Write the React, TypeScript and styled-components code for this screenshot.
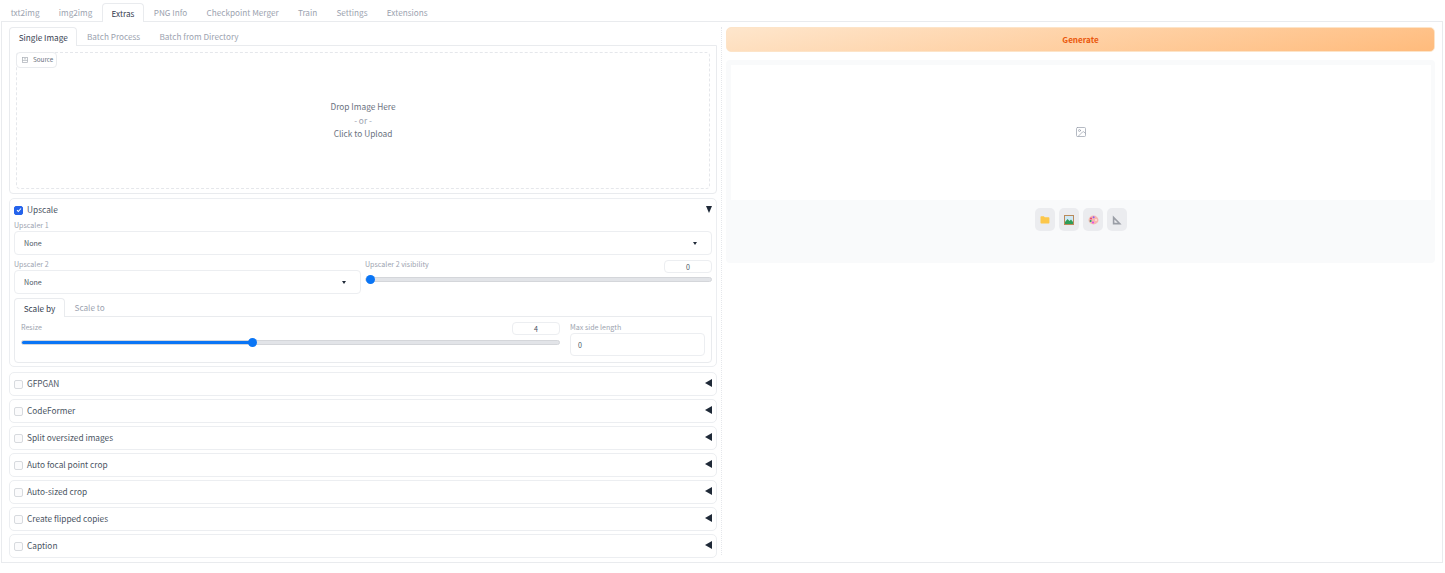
import React from 'react';
import styled, { createGlobalStyle } from 'styled-components';
import { Image as ImageIcon } from 'lucide-react';

const GlobalStyle = createGlobalStyle`
  html, body {
    margin: 0;
    padding: 0;
    background: #fff;
    font-family: "Noto Sans CJK SC", "Noto Sans", sans-serif;
    font-size: 8.2px;
    color: #374151;
  }
  * { box-sizing: border-box; }
`;

const Page = styled.div`
  width: 1445px;
  height: 573px;
  padding: 3px 2px 0 1px;
  overflow: hidden;
`;

const TabBar = styled.div`
  display: flex;
  height: 18px;
  position: relative;
  z-index: 1;
`;

const Tab = styled.div<{ $active?: boolean }>`
  height: ${p => (p.$active ? 19 : 18)}px;
  padding: 0 8.65px 1px;
  display: flex;
  align-items: center;
  color: ${p => (p.$active ? '#374151' : '#9ca3af')};
  background: ${p => (p.$active ? '#fff' : 'transparent')};
  border: 1px solid ${p => (p.$active ? '#e9ebee' : 'transparent')};
  border-bottom: none;
  border-radius: 4px 4px 0 0;
  white-space: nowrap;
`;

const MainPanel = styled.div`
  height: 542px;
  border: 1px solid #e9ebee;
  padding: 5px 7px 0;
  display: flex;
  gap: 9px;
`;

const Column = styled.div<{ $width: number }>`
  width: ${p => p.$width}px;
  flex: none;
`;

const LeftColumn = styled(Column)`
  position: relative;
  &::after {
    content: '';
    position: absolute;
    top: 0;
    bottom: 7px;
    right: -5px;
    border-right: 1px dotted #e5e7eb;
  }
`;

const TabBody = styled.div`
  height: 149px;
  border: 1px solid #e9ebee;
  border-radius: 0 0 4px 4px;
  padding: 6px 6px 4px;
  margin-bottom: 4px;
`;

const DropZone = styled.div`
  height: 137px;
  border: 1px dashed #e5e7eb;
  border-radius: 4px;
  position: relative;
  display: flex;
  flex-direction: column;
  align-items: center;
  justify-content: center;
  line-height: 13.7px;
  color: #6b7280;
  font-size: 8.3px;
`;

const Muted = styled.span`
  color: #9ca3af;
`;

const SourceTag = styled.div`
  position: absolute;
  top: -1px;
  left: -1px;
  width: 41px;
  height: 16px;
  display: flex;
  align-items: center;
  gap: 5px;
  padding-left: 5px;
  border: 1px solid #e9ebee;
  border-radius: 4px;
  background: #fff;
  color: #6b7280;
  font-size: 6.3px;
`;

const Card = styled.div`
  border: 1px solid #eceef1;
  border-radius: 5px;
  background: #fff;
`;

const UpscaleCard = styled(Card)`
  height: 169px;
  padding: 4px 4px 0;
  margin-bottom: 5px;
`;

const AccordionHead = styled.div`
  display: flex;
  align-items: center;
  height: 14px;
  padding-bottom: 2px;
  font-size: 8.3px;
  color: #4b5563;
`;

const Box = styled.span<{ $checked?: boolean }>`
  width: 9px;
  height: 9px;
  flex: none;
  margin: 2px 4px 0 0;
  border-radius: 2px;
  border: 1px solid ${p => (p.$checked ? '#2563eb' : '#d7dade')};
  background: ${p => (p.$checked ? '#2563eb' : '#fbfbfc')};
  display: flex;
  align-items: center;
  justify-content: center;
`;

const Arrow = styled.span<{ $open?: boolean }>`
  margin-left: auto;
  width: 0;
  height: 0;
  ${p =>
    p.$open
      ? `border-left: 3.5px solid transparent; border-right: 3.5px solid transparent; border-top: 7px solid #1f2937;`
      : `border-top: 4px solid transparent; border-bottom: 4px solid transparent; border-right: 7px solid #1f2937;`}
`;

const FieldLabel = styled.div<{ $top?: number }>`
  color: #9ca3af;
  font-size: 7.1px;
  line-height: 11px;
  white-space: nowrap;
  margin-top: ${p => p.$top ?? 0}px;
`;

const Select = styled.div`
  height: 24px;
  border: 1px solid #eceef1;
  border-radius: 4px;
  display: flex;
  align-items: center;
  justify-content: space-between;
  padding: 0 14px 0 9px;
  font-size: 7.1px;
  color: #4b5563;
  &::after {
    content: '';
    border-left: 2.5px solid transparent;
    border-right: 2.5px solid transparent;
    border-top: 3px solid #1f2937;
  }
`;

const FieldRow = styled.div`
  display: flex;
  gap: 4px;
  margin-top: 4px;
`;

const SliderField = styled.div`
  flex: 1;
  min-width: 0;
`;

const SliderHead = styled.div`
  display: flex;
  align-items: flex-start;
  justify-content: space-between;
  height: 14px;
`;

const NumberBox = styled.div`
  width: 48px;
  height: 13px;
  margin-top: 1px;
  border: 1px solid #eceef1;
  border-radius: 4px;
  font-size: 7.1px;
  color: #4b5563;
  display: flex;
  align-items: center;
  justify-content: center;
`;

const Track = styled.div<{ $top: number }>`
  position: relative;
  height: 5px;
  margin-top: ${p => p.$top}px;
  border-radius: 3px;
  background: #e2e4e8;
  border: 1px solid #d4d6da;
`;

const TrackFill = styled.div`
  height: 100%;
  background: #0a75f5;
  border-radius: 3px;
`;

const Thumb = styled.div`
  position: absolute;
  top: -3px;
  width: 9px;
  height: 9px;
  margin-left: -4.5px;
  background: #0a75f5;
  border-radius: 50%;
`;

const Slider: React.FC<{ percent: number; offset?: number; top: number }> = ({ percent, offset = 0, top }) => (
  <Track $top={top}>
    <TrackFill style={{ width: `${percent}%` }} />
    <Thumb style={{ left: `calc(${percent}% + ${offset}px)` }} />
  </Track>
);

const ScaleTabs = styled.div`
  margin-top: 4px;
`;

const ScaleBody = styled.div`
  height: 47px;
  border: 1px solid #e9ebee;
  border-radius: 0 0 4px 4px;
  padding: 4px 6px 0 6px;
  display: flex;
  gap: 10px;
`;

const NumberInput = styled.div`
  width: 135px;
  height: 23px;
  border: 1px solid #eceef1;
  border-radius: 4px;
  padding-left: 7px;
  display: flex;
  align-items: center;
  font-size: 7.1px;
  color: #4b5563;
`;

const Collapsed = styled(Card)`
  height: 24px;
  margin-bottom: 3px;
  padding: 0 4px 2px;
  display: flex;
  align-items: center;
  font-size: 8.3px;
  color: #4b5563;
`;

const GenerateButton = styled.button`
  display: block;
  width: 100%;
  height: 25px;
  border: 1px solid #fde4c8;
  border-radius: 5px;
  background: linear-gradient(170deg, #fee6cc 0%, #ffbb7c 100%);
  color: #ea580c;
  font: 600 8.1px "Noto Sans CJK SC", "Noto Sans", sans-serif;
  padding: 0;
`;

const OutputPanel = styled.div`
  margin-top: 8px;
  height: 203px;
  background: #f9fafb;
  border-radius: 4px;
  padding: 5px 4px 0 5px;
`;

const Gallery = styled.div`
  height: 135px;
  padding-bottom: 1px;
  background: #fff;
  color: #9ca3af;
  display: flex;
  align-items: center;
  justify-content: center;
`;

const ToolRow = styled.div`
  display: flex;
  justify-content: center;
  gap: 4px;
  margin-top: 8px;
`;

const ToolButton = styled.div`
  width: 20px;
  height: 23px;
  background: #ebecef;
  border-radius: 5px;
  display: flex;
  align-items: center;
  justify-content: center;
`;

const topTabs = ['txt2img', 'img2img', 'Extras', 'PNG Info', 'Checkpoint Merger', 'Train', 'Settings', 'Extensions'];
const sections = ['GFPGAN', 'CodeFormer', 'Split oversized images', 'Auto focal point crop', 'Auto-sized crop', 'Create flipped copies', 'Caption'];

const App: React.FC = () => (
  <Page>
    <GlobalStyle />
    <TabBar>
      {topTabs.map(t => (
        <Tab key={t} $active={t === 'Extras'}>
          {t}
        </Tab>
      ))}
    </TabBar>
    <MainPanel>
      <LeftColumn $width={708}>
        <TabBar>
          <Tab $active>Single Image</Tab>
          <Tab>Batch Process</Tab>
          <Tab>Batch from Directory</Tab>
        </TabBar>
        <TabBody>
          <DropZone>
            <SourceTag>
              <svg width="6" height="6" viewBox="0 0 6 6" fill="none" stroke="#a8adb5" strokeWidth="0.7">
                <rect x="0.4" y="0.4" width="5.2" height="5.2" />
                <path d="M0.4 3.4h5.2M2 1.8h2" />
              </svg>
              Source
            </SourceTag>
            <span>Drop Image Here</span>
            <Muted>- or -</Muted>
            <span>Click to Upload</span>
          </DropZone>
        </TabBody>

        <UpscaleCard>
          <AccordionHead>
            <Box $checked>
              <svg width="6" height="6" viewBox="0 0 6 6" fill="none" stroke="#fff" strokeWidth="1.1">
                <path d="M1 3.2l1.3 1.3L5 1.5" />
              </svg>
            </Box>
            Upscale
            <Arrow $open />
          </AccordionHead>
          <FieldLabel $top={3}>Upscaler 1</FieldLabel>
          <Select>None</Select>
          <FieldRow>
            <SliderField>
              <FieldLabel>Upscaler 2</FieldLabel>
              <Select>None</Select>
            </SliderField>
            <SliderField>
              <SliderHead>
                <FieldLabel>Upscaler 2 visibility</FieldLabel>
                <NumberBox>0</NumberBox>
              </SliderHead>
              <Slider percent={0} offset={4} top={4} />
            </SliderField>
          </FieldRow>
          <ScaleTabs>
            <TabBar>
              <Tab $active>Scale by</Tab>
              <Tab>Scale to</Tab>
            </TabBar>
            <ScaleBody>
              <SliderField>
                <SliderHead>
                  <FieldLabel $top={1}>Resize</FieldLabel>
                  <NumberBox>4</NumberBox>
                </SliderHead>
                <Slider percent={43} top={5} />
              </SliderField>
              <div>
                <FieldLabel $top={1}>Max side length</FieldLabel>
                <NumberInput>0</NumberInput>
              </div>
            </ScaleBody>
          </ScaleTabs>
        </UpscaleCard>

        {sections.map(s => (
          <Collapsed key={s}>
            <Box />
            {s}
            <Arrow />
          </Collapsed>
        ))}
      </LeftColumn>

      <Column $width={709}>
        <GenerateButton>Generate</GenerateButton>
        <OutputPanel>
          <Gallery>
            <ImageIcon size={12} strokeWidth={1.5} />
          </Gallery>
          <ToolRow>
            <ToolButton>
              <svg width="10" height="10" viewBox="0 0 10 10">
                <path d="M0.5 2a.7.7 0 0 1 .7-.7h2.6l1 1h3.9a.7.7 0 0 1 .7.7v4.8a.7.7 0 0 1-.7.7H1.2a.7.7 0 0 1-.7-.7z" fill="#fcc74a" />
              </svg>
            </ToolButton>
            <ToolButton>
              <svg width="10" height="10" viewBox="0 0 10 10">
                <rect width="10" height="10" fill="#b98a5a" />
                <rect x="1" y="1" width="8" height="8" fill="#cfe8f5" />
                <path d="M1 7l2.5-3 2 2 1.5-1.5L9 7v2H1z" fill="#2f9e58" />
              </svg>
            </ToolButton>
            <ToolButton>
              <svg width="11" height="10" viewBox="0 0 11 10">
                <ellipse cx="5.5" cy="5" rx="5" ry="4.4" fill="#f6b7b0" />
                <circle cx="3" cy="3.4" r="1" fill="#e0457b" />
                <circle cx="5.6" cy="2.3" r="1" fill="#8b5cf6" />
                <circle cx="2.6" cy="6" r="1" fill="#22a06b" />
                <circle cx="5" cy="7.6" r="1" fill="#d946ef" />
                <circle cx="8" cy="5" r="1.1" fill="#fde2dc" />
              </svg>
            </ToolButton>
            <ToolButton>
              <svg width="10" height="10" viewBox="0 0 10 10">
                <path d="M0.8 0.6L9.6 9.4H0.8zM2.4 4.4v3.4h3.4z" fill="#9a9ea6" fillRule="evenodd" />
              </svg>
            </ToolButton>
          </ToolRow>
        </OutputPanel>
      </Column>
    </MainPanel>
  </Page>
);

export default App;
